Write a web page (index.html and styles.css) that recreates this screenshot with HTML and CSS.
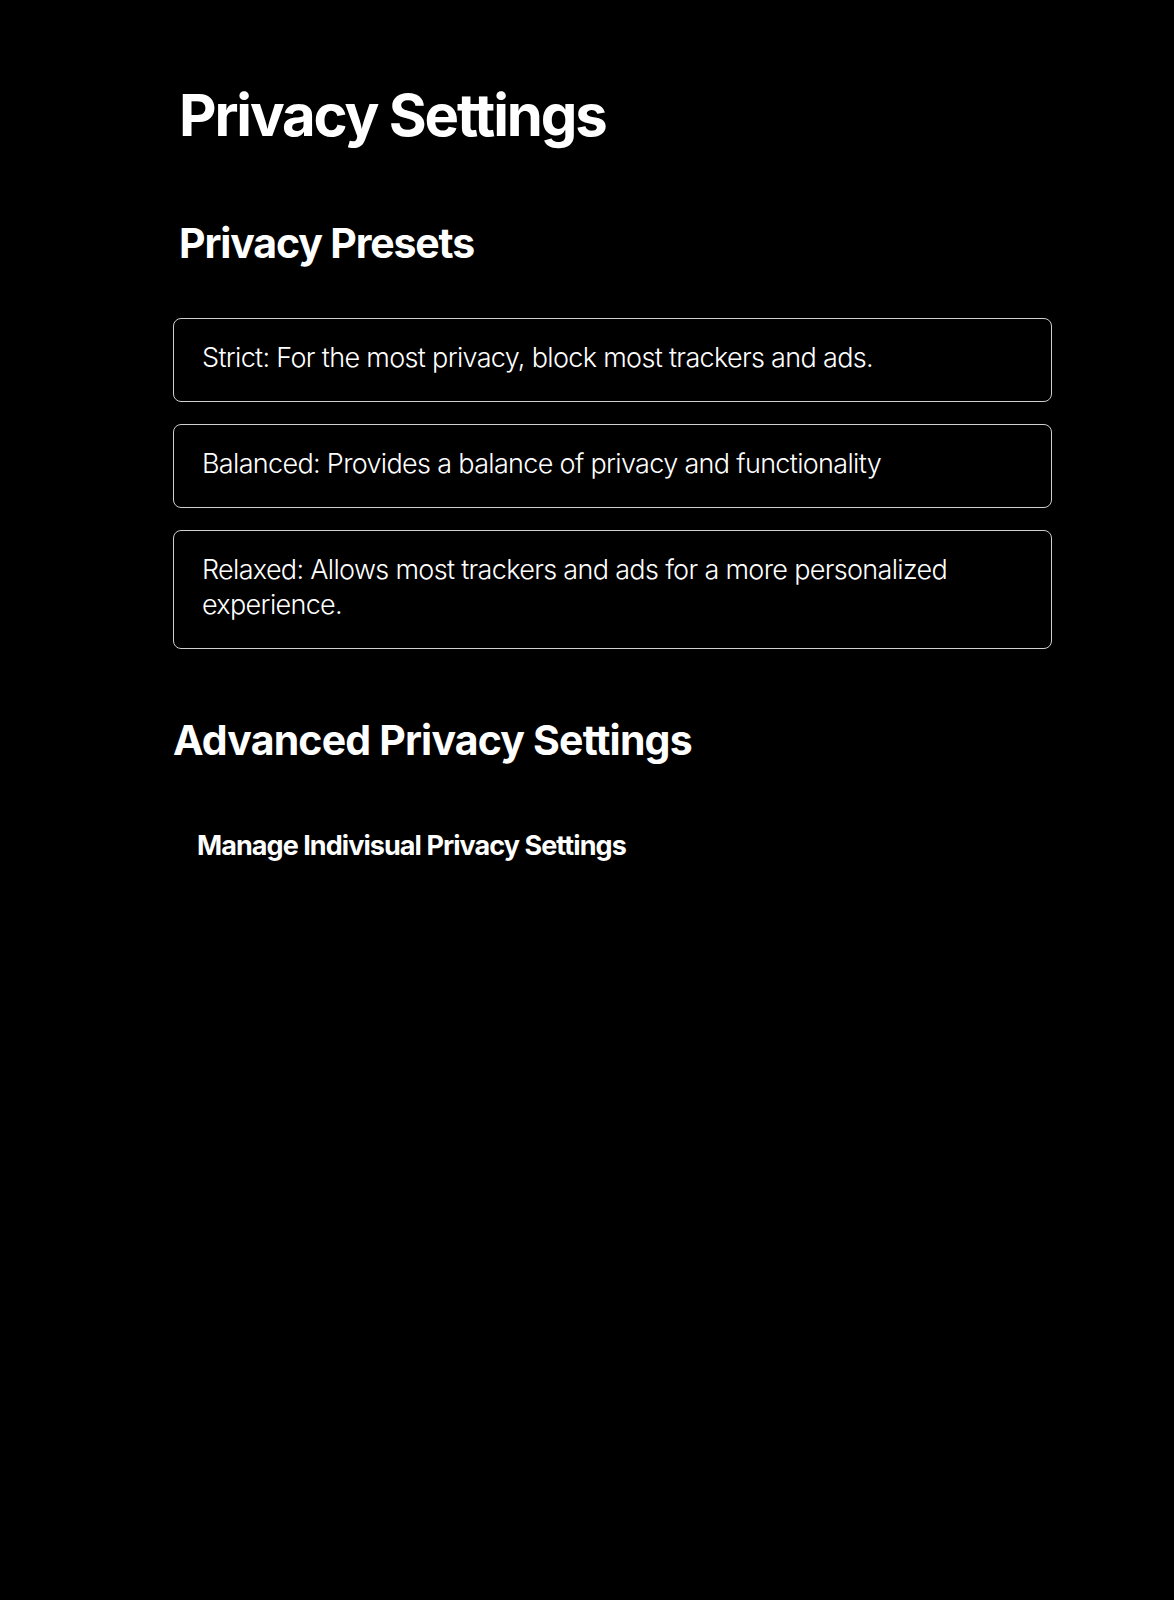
FILE: index.html
```html
<!DOCTYPE html>
<html lang="en">
<head>
    <meta charset="UTF-8">
    <meta name="viewport" content="width=device-width, initial-scale=1.0">
    <title>Privacy Settings</title>
    <link rel="stylesheet" href="styles.css">
</head>
<body>

    <main class="settings">
        <h1 class="page-title">Privacy Settings</h1>

        <section class="presets">
            <h2 class="presets-title">Privacy Presets</h2>
            <div class="preset-list">
                <div class="preset">Strict: For the most privacy, block most trackers and ads.</div>
                <div class="preset">Balanced: Provides a balance of privacy and functionality</div>
                <div class="preset">Relaxed: Allows most trackers and ads for a more personalized experience.</div>
            </div>
        </section>

        <section class="advanced">
            <h2 class="advanced-title">Advanced Privacy Settings</h2>
            <h3 class="manage-title">Manage Indivisual Privacy Settings</h3>
        </section>
    </main>

</body>
</html>
```

FILE: styles.css
```css
 body {
     margin: 0;
     padding: 0;
     min-height: 100vh;
     background-color: #000;
     color: #fff;
     font-family: Inter, 'Liberation Sans', sans-serif;
 }

 .settings {
     width: 879px;
     margin-left: 173px;
 }

 .page-title {
     margin: 0;
     padding: 81px 0 0 6px;
     font-size: 58px;
     line-height: 1.2;
     font-weight: 700;
     letter-spacing: -0.037em;
 }

 .presets-title {
     margin: 68px 0 0;
     padding-left: 6px;
     font-size: 41px;
     line-height: 1.2;
     font-weight: 700;
     letter-spacing: -0.028em;
 }

 .preset-list {
     margin-top: 50px;
     display: flex;
     flex-direction: column;
     gap: 22px;
 }

 .preset {
     border: 1px solid #cfcfcf;
     border-radius: 8px;
     padding: 21px 28px 26px;
     font-size: 27px;
     line-height: 35px;
     font-weight: 300;
     letter-spacing: -0.025em;
 }

 .advanced-title {
     margin: 67px 0 0;
     padding-left: 0;
     font-size: 41px;
     line-height: 1.2;
     font-weight: 700;
     letter-spacing: -0.02em;
 }

 .manage-title {
     margin: 65px 0 0;
     padding-left: 24px;
     font-size: 27px;
     line-height: 1.2;
     font-weight: 700;
     letter-spacing: -0.035em;
 }
```
